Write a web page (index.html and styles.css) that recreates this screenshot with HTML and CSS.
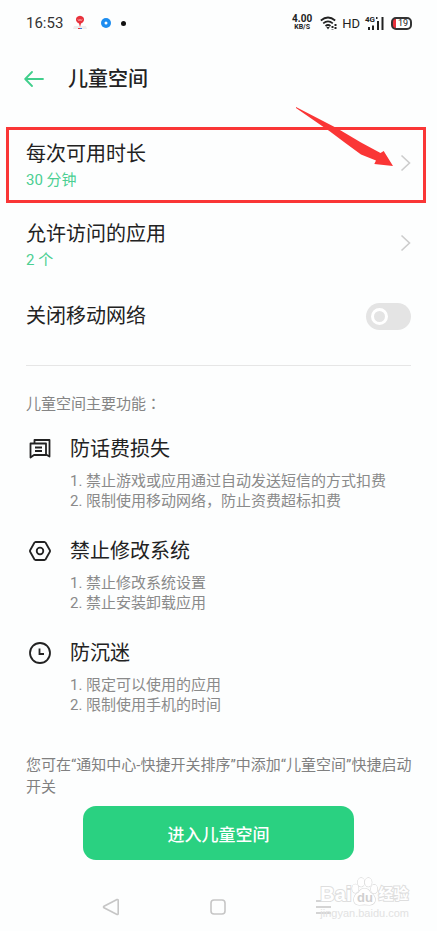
FILE: index.html
```html
<!DOCTYPE html>
<html lang="zh-CN">
<head>
    <meta charset="UTF-8">
    <meta name="viewport" content="width=device-width, initial-scale=1.0">
    <title>儿童空间</title>
    <link rel="stylesheet" href="styles.css">
</head>
<body>

<!-- Status bar -->
<div class="status">
    <span class="clock">16:53</span>
    <svg class="pin" width="14" height="16" viewBox="0 0 14 16">
        <path d="M1 11h12l1 3H0z" fill="#eeeeee"/>
        <path d="M7 12L6 8.500A4 4 0 1 1 8 8.500z" fill="#e8323c"/>
        <path d="M5 4.500l1 1 1-1 1 1 1-1" stroke="#fff" stroke-width=".8" fill="none"/>
        <path d="M5 13.500h2" stroke="#e8323c"/>
        <path d="M7 13.500h2" stroke="#3a7be0"/>
    </svg>
    <svg class="ring" width="10" height="10" viewBox="0 0 10 10">
        <circle cx="5" cy="5" r="5" fill="#1d8df0"/>
        <circle cx="5" cy="5" r="1.500" fill="#fff"/>
    </svg>
    <span class="dot"></span>
    <span class="speed"><b>4.00</b><small>KB/S</small></span>
    <svg class="wifi" width="17" height="14" viewBox="0 0 17 14" fill="none" stroke="#222" stroke-width="1.700">
        <path d="M.8 4.500Q8 -1.500 15.200 4.500M3.200 7.400Q8 3.500 12.800 7.400M5.500 10Q8 8 10.500 10"/>
        <path d="M6.300 11h3.400L8 13.500z" fill="#222" stroke="none"/>
        <path d="M12.500 10v3.500M15.500 8v5.500" stroke-width="2" stroke-dasharray="2 1"/>
    </svg>
    <span class="hd">HD</span>
    <span class="signal">
        <small>4G</small>
        <svg width="19" height="14" viewBox="0 0 19 14" fill="#222">
            <path d="M3 11h2v3H3zM7 9.500h2V14H7zM12 5h2v9h-2zM16.500 1h2v13h-2zM11 1h1.500v2H11z"/>
        </svg>
    </span>
    <span class="battery">19</span>
</div>

<!-- Title bar -->
<header class="header">
    <a class="back" href="#" aria-label="返回">
        <svg width="20" height="16" viewBox="0 0 20 16" fill="none" stroke="#41cf8c" stroke-width="1.800" stroke-linecap="round" stroke-linejoin="round">
            <path d="M19 8H1.500M8 1L1.200 8 8 15"/>
        </svg>
    </a>
    <h1>儿童空间</h1>
</header>

<main>
    <!-- Settings -->
    <a class="row marked" href="#">
        <span class="row-text">
            <span class="name">每次可用时长</span>
            <span class="value">30 分钟</span>
        </span>
        <svg class="chevron" width="11" height="18" viewBox="0 0 11 18"><path d="M1.500 1.500L9.500 9l-8 7.500"/></svg>
        <svg class="pointer" width="98" height="61" viewBox="0 0 98 61">
            <path d="M0 0L41 21.300 65 35.500 84.500 46 87.700 44 97 59 78.300 57 80 53.500 65 47.500 50 36.500 34 24.500 0 1z" fill="#fa3636"/>
        </svg>
    </a>
    <a class="row" href="#">
        <span class="row-text">
            <span class="name">允许访问的应用</span>
            <span class="value">2 个</span>
        </span>
        <svg class="chevron" width="11" height="18" viewBox="0 0 11 18"><path d="M1.500 1.500L9.500 9l-8 7.500"/></svg>
    </a>
    <div class="row short">
        <label class="name" for="network">关闭移动网络</label>
        <input class="switch" type="checkbox" id="network">
    </div>

    <hr>

    <!-- Features -->
    <p class="intro">儿童空间主要功能<span lang="zh-TW">：</span></p>

    <section class="feature">
        <svg width="22" height="22" viewBox="0 0 22 22" fill="none" stroke="#222" stroke-width="1.800" stroke-linejoin="round">
            <path d="M1.500 5.500H17V17H5l-3.500 2.500z"/>
            <path d="M5.500 5.500V2H20.500V18.500L17 16.500"/>
            <path d="M6 9.500h7M6 13h7"/>
        </svg>
        <div>
            <h2>防话费损失</h2>
            <p>1. 禁止游戏或应用通过自动发送短信的方式扣费</p>
            <p>2. 限制使用移动网络，防止资费超标扣费</p>
        </div>
    </section>

    <section class="feature">
        <svg width="22" height="22" viewBox="0 0 22 22" fill="none" stroke="#222" stroke-width="1.800" stroke-linejoin="round">
            <path d="M6.500 2h9L16.500 2.500 21 10.500v1L16.500 19.500l-1 .5h-9l-1-.5L1 11.500v-1L5.500 2.500z"/>
            <circle cx="11" cy="11" r="3.300"/>
        </svg>
        <div>
            <h2>禁止修改系统</h2>
            <p>1. 禁止修改系统设置</p>
            <p>2. 禁止安装卸载应用</p>
        </div>
    </section>

    <section class="feature">
        <svg width="22" height="22" viewBox="0 0 22 22" fill="none" stroke="#222" stroke-width="1.800">
            <circle cx="11" cy="11" r="10"/>
            <path d="M10.500 6.500V12H15"/>
        </svg>
        <div>
            <h2>防沉迷</h2>
            <p>1. 限定可以使用的应用</p>
            <p>2. 限制使用手机的时间</p>
        </div>
    </section>

    <p class="note">您可在“通知中心-快捷开关排序”中添加“儿童空间”快捷启动开关</p>

    <button class="enter" type="button">进入儿童空间</button>
</main>

<!-- System navigation -->
<nav class="nav">
    <a href="#" aria-label="返回">
        <svg width="18" height="18" viewBox="0 0 18 18"><path d="M15 1.500L2 8.200q-1 .8 0 1.600L15 16.500q1.200.3 1.200-1V2.500q0-1.200-1.200-1z"/></svg>
    </a>
    <a href="#" aria-label="主页">
        <svg width="18" height="18" viewBox="0 0 18 18"><rect x="2" y="2" width="14" height="14" rx="3"/></svg>
    </a>
    <a href="#" aria-label="最近任务">
        <svg width="18" height="18" viewBox="0 0 18 18"><path d="M1 3h15M1 9h15M1 15h15"/></svg>
    </a>
    <div class="watermark">
        <div class="brand">
            <span>Bai</span>
            <span class="paw">
                <svg width="27" height="29" viewBox="0 0 28 30" fill="#fff" stroke="#d8d8d8" stroke-width="1.300">
                    <ellipse cx="4.500" cy="12" rx="3.300" ry="4.500"/>
                    <ellipse cx="10.500" cy="5.500" rx="3.500" ry="4.500"/>
                    <ellipse cx="18" cy="5.500" rx="3.500" ry="4.500"/>
                    <ellipse cx="24" cy="12.500" rx="3.300" ry="4.500"/>
                    <path d="M14 12q4 0 6 4 5 3 5 7.500T19.500 29q-5.500-1-11 0Q3 28.500 3 23.500T8 16q2-4 6-4z"/>
                </svg>
                <em>du</em>
            </span>
            <span class="cn">经验</span>
        </div>
        <div class="site">jingyan.baidu.com</div>
    </div>
</nav>

</body>
</html>
```
FILE: styles.css
```css
*,
*::before,
*::after {
    box-sizing: border-box;
}

body {
    margin: 0;
    background-color: #fdfefe;
    color: #222;
    font-family: Roboto, "Noto Sans CJK SC", sans-serif;
}

a {
    color: inherit;
    text-decoration: none;
}

h1, h2, p {
    margin: 0;
}

svg {
    display: block;
    flex: none;
}

/* Status bar */
.status {
    display: flex;
    align-items: center;
    height: 46px;
    padding: 0 25px 0 26px;
}

.clock {
    font-size: 15px;
    color: #333;
}

.pin {
    margin-left: 10px;
}

.ring {
    margin-left: 14px;
}

.dot {
    width: 5px;
    height: 5px;
    margin-left: 10px;
    border-radius: 50%;
    background-color: #111;
}

.speed {
    margin-left: auto;
    text-align: center;
    line-height: 8px;
}

.speed b {
    display: block;
    font-size: 10px;
}

.speed small {
    display: block;
    font-size: 7px;
    font-weight: 700;
}

.wifi {
    margin-left: 8px;
}

.hd {
    margin-left: 5px;
    font-size: 13px;
}

.signal {
    position: relative;
    margin-left: 5px;
}

.signal small {
    position: absolute;
    top: 0;
    left: 0;
    font-size: 8px;
    font-weight: 700;
    line-height: 8px;
}

.battery {
    width: 21px;
    height: 13px;
    margin-left: 7px;
    border: 2px solid #333;
    border-radius: 5px;
    background: linear-gradient(to right, #e8323c 3px, #fff 3px);
    font-size: 9px;
    line-height: 9px;
    text-align: right;
    padding-right: 2px;
}

/* Title bar */
.header {
    display: flex;
    align-items: center;
    height: 66px;
    padding: 0 24px;
}

.header h1 {
    margin-left: 24px;
    font-size: 20px;
    font-weight: 500;
    line-height: 28px;
}

main {
    display: flex;
    flex-direction: column;
    padding-top: 11px;
}

/* Settings */
.row {
    display: flex;
    align-items: center;
    justify-content: space-between;
    position: relative;
    height: 80px;
    padding: 0 26px;
}

.row.short {
    height: 66px;
}

.marked::after {
    content: "";
    position: absolute;
    inset: 4px 11px 0 6px;
    border: 3px solid #fa3636;
}

.row-text {
    padding-top: 6px;
}

.name {
    display: block;
    font-size: 20px;
    line-height: 28px;
}

.value {
    display: block;
    font-size: 15px;
    line-height: 24px;
    color: #4bcf92;
}

.chevron {
    fill: none;
    stroke: #ccc;
    stroke-width: 1.6;
}

.pointer {
    position: absolute;
    top: -16px;
    right: 43px;
    z-index: 1;
}

.switch {
    appearance: none;
    display: flex;
    align-items: center;
    width: 45px;
    height: 27px;
    margin: 0;
    padding-left: 5px;
    border-radius: 14px;
    background-color: #e4e4e4;
}

.switch::before {
    content: "";
    width: 17px;
    height: 17px;
    border: 3px solid #fff;
    border-radius: 50%;
}

.switch:checked {
    background-color: #2ad181;
}

hr {
    width: calc(100% - 52px);
    height: 1px;
    margin: 16px 26px 26px;
    border: 0;
    background-color: #e6e6e6;
}

/* Features */
.intro {
    padding: 0 26px;
    font-size: 15px;
    line-height: 22px;
    color: #858585;
}

.intro span {
    font-family: "Noto Sans CJK TC", sans-serif;
}

.feature {
    display: flex;
    gap: 19px;
    margin-top: 26px;
    padding: 0 29px;
}

.intro + .feature {
    margin-top: 20px;
}

.feature > svg {
    margin-top: 3px;
}

.feature h2 {
    margin-bottom: 8px;
    font-size: 20px;
    font-weight: 400;
    line-height: 28px;
}

.feature p {
    font-size: 15px;
    line-height: 20px;
    color: #8a8a8a;
    white-space: nowrap;
}

.note {
    margin-top: 39px;
    padding: 0 20px 0 26px;
    font-size: 15px;
    line-height: 22px;
    color: #808080;
}

.enter {
    align-self: center;
    width: 62%;
    height: 54px;
    margin-top: 8px;
    border: 0;
    border-radius: 13px;
    background-color: #2ad181;
    color: #fff;
    font-family: inherit;
    font-size: 17px;
    font-weight: 500;
}

/* System navigation */
.nav {
    display: flex;
    justify-content: space-between;
    position: relative;
    padding: 38px 104px 15px 102px;
}

.nav a svg {
    fill: none;
    stroke: #c6c6c6;
    stroke-width: 1.6;
}

.watermark {
    position: absolute;
    top: 17px;
    right: 28px;
    color: #fff;
    font-family: "Liberation Sans", "Noto Sans CJK SC", sans-serif;
    -webkit-text-stroke: 2px #dedede;
    paint-order: stroke fill;
}

.brand {
    display: flex;
    align-items: flex-end;
    font-size: 20px;
    font-weight: 700;
    line-height: 24px;
}

.paw {
    position: relative;
}

.paw em {
    position: absolute;
    bottom: 0;
    left: 0;
    width: 100%;
    color: #d0d0d0;
    font-size: 13px;
    font-style: normal;
    line-height: 16px;
    text-align: center;
    -webkit-text-stroke: 0;
}

.brand .cn {
    font-size: 15px;
}

.site {
    color: #e2e2e2;
    font-size: 11px;
    line-height: 14px;
    -webkit-text-stroke: 0;
}
```
